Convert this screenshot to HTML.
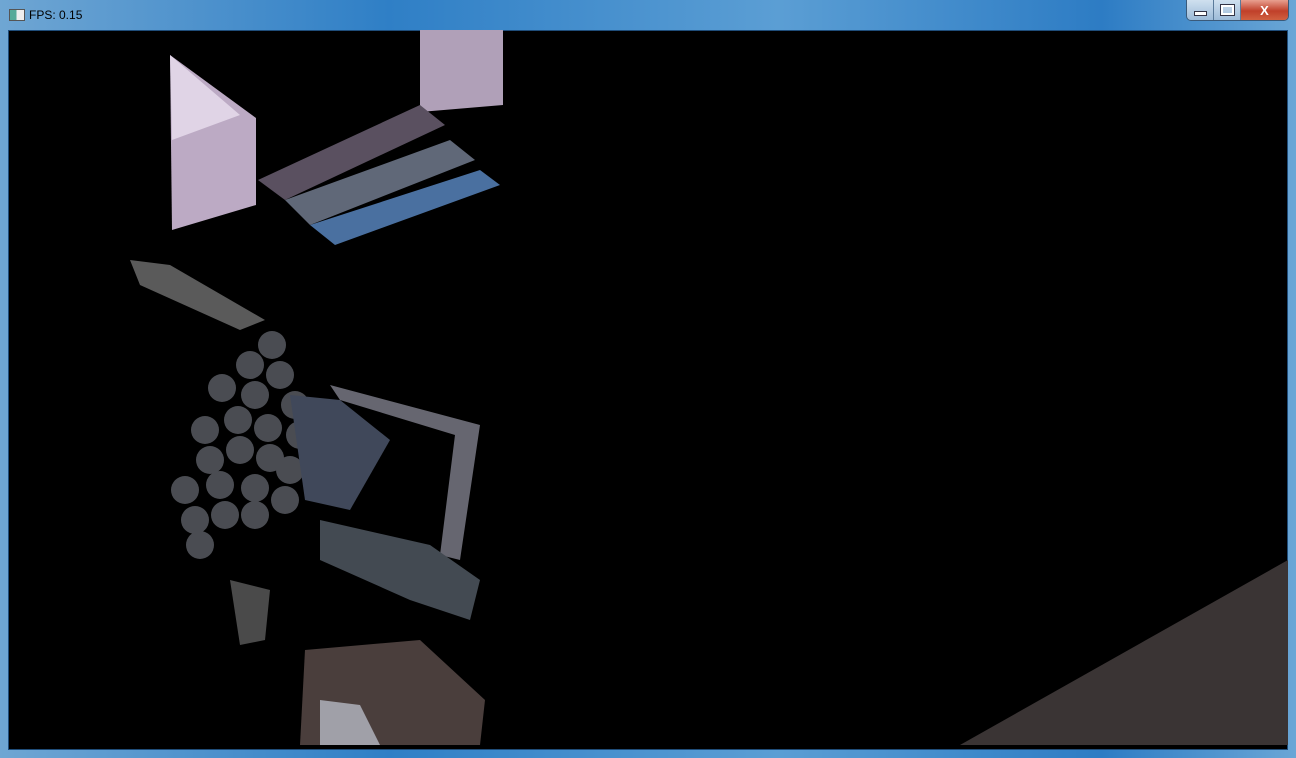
<!DOCTYPE html>
<html><head><style>
body{margin:0;width:1296px;height:758px;overflow:hidden;background:linear-gradient(90deg,#6fa6d3,#2f7fc6 30%,#5b9ed4 60%,#2d7cc4 85%,#6aa6d6);position:relative;font-family:"Liberation Sans",sans-serif}
.t{position:absolute;left:29px;top:8px;font-size:12px;color:#000}
.ic{position:absolute;left:9px;top:9px;width:14px;height:10px;border:1px solid #555;background:linear-gradient(90deg,#5a9 0 45%,#eee 45%)}
.btns{position:absolute;left:1186px;top:0;height:20px;width:101px;border:1px solid #3a5a7a;border-top:none;border-radius:0 0 5px 5px;overflow:hidden;display:flex}
.b{height:20px;background:linear-gradient(#cfe0ef,#9dbbd8);border-right:1px solid #5a7a9a;display:flex;align-items:center;justify-content:center;color:#fff}
.x{background:linear-gradient(#e8a090,#c0402a 55%,#d06040);color:#fff;font-weight:bold;font-size:13px}
.view{position:absolute;left:8px;top:30px;width:1280px;height:720px;background:#000;border:1px solid #1f4d7a;box-sizing:border-box}
</style></head><body>
<div class="ic"></div><div class="t">FPS: 0.15</div>
<div class="btns"><div class="b" style="width:26px"><div style="width:11px;height:3px;background:#fff;border:1px solid #334;margin-top:6px"></div></div><div class="b" style="width:26px"><div style="width:9px;height:6px;border:2px solid #fff;outline:1px solid #334"></div></div><div class="b x" style="width:47px;border:none">X</div></div>
<div class="view">
<svg width="1280" height="720" viewBox="8 30 1280 720" style="position:absolute;left:-1px;top:-1px">
<polygon points="420,30 503,30 503,105 420,112" fill="#b0a0b8"/>
<polygon points="170,55 256,118 256,205 172,230" fill="#bcaac4"/>
<polygon points="170,55 240,115 172,140" fill="#e0d4e6"/>
<polygon points="258,180 420,105 445,125 285,200" fill="#5a5060"/>
<polygon points="285,200 450,140 475,160 310,225" fill="#606878"/>
<polygon points="310,225 480,170 500,185 335,245" fill="#4a70a0"/>
<polygon points="130,260 170,265 265,320 240,330 140,285" fill="#5a5a5a"/>
<g fill="#4a4c52">
<circle cx="272" cy="345" r="14"/><circle cx="250" cy="365" r="14"/><circle cx="280" cy="375" r="14"/>
<circle cx="222" cy="388" r="14"/><circle cx="255" cy="395" r="14"/><circle cx="295" cy="405" r="14"/>
<circle cx="205" cy="430" r="14"/><circle cx="238" cy="420" r="14"/><circle cx="268" cy="428" r="14"/><circle cx="300" cy="435" r="14"/>
<circle cx="210" cy="460" r="14"/><circle cx="240" cy="450" r="14"/><circle cx="270" cy="458" r="14"/><circle cx="290" cy="470" r="14"/>
<circle cx="185" cy="490" r="14"/><circle cx="220" cy="485" r="14"/><circle cx="255" cy="488" r="14"/><circle cx="285" cy="500" r="14"/>
<circle cx="195" cy="520" r="14"/><circle cx="225" cy="515" r="14"/><circle cx="255" cy="515" r="14"/><circle cx="200" cy="545" r="14"/>
</g>
<polygon points="290,395 340,400 390,440 350,510 305,500" fill="#40485a"/>
<polygon points="330,385 480,425 460,560 440,555 455,435 340,400" fill="#666670"/>
<polygon points="320,520 430,545 480,580 470,620 410,600 320,560" fill="#434a52"/>
<polygon points="305,650 420,640 485,700 480,745 300,745" fill="#4a3e3c"/>
<polygon points="320,700 360,705 380,745 320,745" fill="#a0a0a8"/>
<polygon points="960,745 1288,560 1288,745" fill="#3a3434"/>
<polygon points="230,580 270,590 265,640 240,645" fill="#4a4a4a"/>
</svg>
</div>
</body></html>
